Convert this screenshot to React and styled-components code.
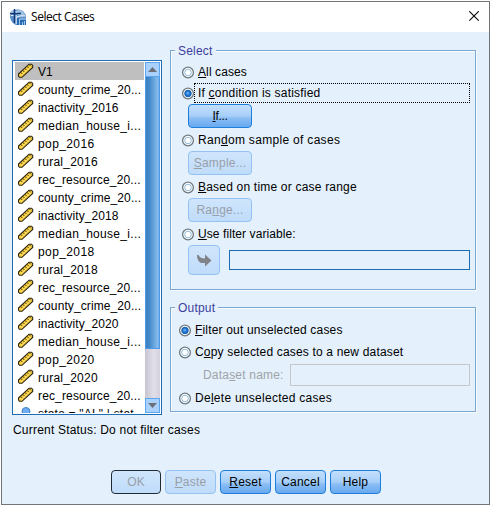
import React from "react";
import styled, { createGlobalStyle } from "styled-components";

const BG = "#e4f0fc";

const GlobalStyle = createGlobalStyle`
  *, *::before, *::after { box-sizing: border-box; }
  body { margin: 0; background: #fff; }
  svg { display: block; flex: none; }
`;

const Page = styled.div`
  width: 491px;
  height: 505px;
  padding: 1px 1px 0;
  background: #fff;
  font: 12px/18px "Liberation Sans", Arial, sans-serif;
  color: #000;
  overflow: hidden;
`;
const Window = styled.div`
  height: 504px;
  display: flex;
  flex-direction: column;
  border: 1px solid #70757a;
  background: ${BG};
`;
const TitleBar = styled.header`
  height: 30px;
  flex: none;
  display: flex;
  align-items: center;
  padding: 0 10px 0 8px;
  background: #fff;
`;
const Title = styled.h1`
  margin: 0 auto 0 4px;
  font: 400 12px/18px "Open Sans", "Noto Sans", sans-serif;
  letter-spacing: -0.45px;
  white-space: nowrap;
`;
const Columns = styled.div`
  display: flex;
  align-items: flex-start;
  height: 389px;
  padding: 18px 0 0 10px;
  gap: 8px;
`;
const ListBox = styled.div`
  width: 150px;
  height: 355px;
  margin-top: 10px;
  padding: 1px;
  display: flex;
  border: 1px solid #1f6db8;
  background: #fff;
`;
const Items = styled.ul`
  width: 131px;
  height: 351px;
  margin: 0;
  padding: 0 0 0 1px;
  list-style: none;
  overflow: hidden;
`;
const Item = styled.li`
  height: 18px;
  width: 129px;
  padding-left: 3px;
  display: flex;
  align-items: center;
  gap: 4px;
  line-height: 20px;
  white-space: nowrap;
  background: ${(p) => (p.$selected ? "#bfbfbf" : "transparent")};
`;
const ItemName = styled.span`
  height: 18px;
  letter-spacing: ${(p) => p.$track}px;
`;
const Text = styled.span`
  letter-spacing: ${(p) => p.$track ?? 0.2}px;
  white-space: nowrap;
  color: ${(p) => (p.$muted ? "#a0a3a8" : "inherit")};
  u {
    text-decoration-thickness: 1px;
    text-underline-offset: 1px;
    text-decoration-skip-ink: none;
  }
`;
const ScrollBar = styled.div`
  width: 15px;
  display: flex;
  flex-direction: column;
  background: linear-gradient(90deg, #c6c4d0, #e1dfe8 60%, #d3d0dc);
`;
const ScrollButton = styled.div`
  height: 15px;
  display: grid;
  place-items: center;
  border: 1px solid #5ba6f0;
  background: #a9d1fb;
`;
const Thumb = styled.div`
  height: 272px;
  border: solid #4d9be8;
  border-width: 0 1px 1px;
  background: linear-gradient(90deg, #3c7fc0, #4288c9 25%, #86bcec 90%, #6aaae6);
  margin-bottom: auto;
`;
const Panels = styled.div`
  display: flex;
  flex-direction: column;
  gap: 17px;
`;
const Group = styled.section`
  width: 306px;
  height: ${(p) => p.$height}px;
  padding: 0 5px 0 ${(p) => p.$inset}px;
  border: 1px solid #7ba7d3;
  box-shadow: 1px 1px 0 #fafdff, inset 1px 1px 0 #fafdff;
`;
const Legend = styled.h2`
  width: fit-content;
  height: 16px;
  margin: -8px 0 0 ${(p) => 4 - p.$inset}px;
  padding: 0 3px;
  font: inherit;
  line-height: 17px;
  color: #3d3d9e;
  background: ${BG};
`;
const Option = styled.div`
  height: 20px;
  margin-top: ${(p) => p.$gap || 0}px;
  display: flex;
  align-items: center;
`;
const OptionLabel = styled.div`
  height: 20px;
  flex: 1;
  margin-left: -1px;
  padding-left: 3px;
  display: flex;
  align-items: center;
  border: 1px dotted ${(p) => (p.$focused ? "#000" : "transparent")};
`;
const Indented = styled.div`
  display: flex;
  align-items: center;
  margin: ${(p) => p.$gap}px 0 0 ${(p) => p.$indent}px;
`;
const tones = {
  normal: { border: "#1b7fdb", bg: "linear-gradient(#c4dffb, #a7cffa 50%, #8abdf4 60%, #68a9ee)", color: "#000" },
  disabled: { border: "#94c3f1", bg: "linear-gradient(#d0e5fc, #bfdcfb)", color: "#999fa8" },
  primary: { border: "#202a33", bg: "linear-gradient(#d0e5fc, #bfdcfb)", color: "#999fa8" },
};
const Button = styled.button`
  width: ${(p) => p.$width}px;
  height: ${(p) => p.$height || 24}px;
  padding: 0;
  display: flex;
  align-items: center;
  justify-content: center;
  font: inherit;
  border: 1px solid ${(p) => tones[p.$tone || "normal"].border};
  border-radius: 4px;
  background: ${(p) => tones[p.$tone || "normal"].bg};
  color: ${(p) => tones[p.$tone || "normal"].color};
`;
const Field = styled.div`
  width: ${(p) => p.$width}px;
  height: ${(p) => p.$height}px;
  margin-left: ${(p) => p.$gap}px;
  border: 1px solid ${(p) => (p.$disabled ? "#c3c7cb" : "#1c6bb5")};
`;
const Status = styled.div`
  margin-left: 11px;
  height: 18px;
`;
const Footer = styled.footer`
  margin: 31px 0 0 109px;
  display: flex;
  gap: 4px;
`;

const AppIcon = () => (
  <svg width="17" height="17" viewBox="0 0 17 17">
    <path d="M1 2Q8-1 13 2L16 6V16H6Q1 14 0 8Z" fill="#5c8fc8" />
    <path d="M7 0Q13 0 15 6H7Z" fill="#9cc0e2" />
    <path d="M0 4.5H11M4.5 0V14" stroke="#123a78" strokeWidth="1.5" />
    <path d="M1 3H3.5M1 6.5H3.5M6.2 2V4M6.2 6V15" stroke="#e6f1fc" />
    <path d="M7 8.5Q8 6.8 11 6.8H15.5" fill="none" stroke="#eef6ff" strokeWidth="1.2" />
    <path d="M7 16V9H9V16M10 16V11H16V16" fill="#286ab0" />
    <path d="M9.5 16V10H16M12.5 16V13M14.5 16V12" fill="none" stroke="#9dc5ea" />
  </svg>
);
const CloseIcon = () => (
  <svg width="10" height="12" viewBox="0 0 10 12">
    <path d="M.3.3l9.4 9.4M9.7.3l-9.4 9.4" stroke="#000" strokeWidth="1.1" />
  </svg>
);
const RulerIcon = () => (
  <svg width="16" height="16" viewBox="0 0 16 16">
    <path d="M.5 11L11 1.2H13.5L14.7 2.5V4.5L4 14.3H1.5L.5 13Z" fill="#fbcf38" stroke="#2a2412" strokeWidth="1.1" />
    <path d="M2.6 9.3l2 2M4.7 7.3l2 2M6.8 5.3l2 2M8.9 3.3l2 2M11 1.5l2 2" stroke="#33290c" strokeWidth=".9" />
    <path d="M3 12.7L13.5 3" stroke="#ffe98a" strokeWidth=".8" />
  </svg>
);
const NominalIcon = () => (
  <svg width="16" height="16" viewBox="0 0 16 16">
    <circle cx="8" cy="6.5" r="4" fill="#6fadf2" stroke="#3e7fc6" />
  </svg>
);
const Radio = ({ checked }) => (
  <svg width="13" height="13" viewBox="0 0 13 13">
    <circle cx="6" cy="6.5" r="5.4" fill="#fff" stroke="#6f7a80" strokeWidth="1.3" />
    <circle cx="6" cy="6.5" r="3.3" fill={checked ? "#1f74cf" : "#fff"} stroke={checked ? "#175fae" : "#8fb9d9"} />
    {checked && <circle cx="5.7" cy="6.2" r="1.4" fill="#5da5ee" />}
  </svg>
);
const Arrow = ({ up }) => (
  <svg width="9" height="5" viewBox="0 0 9 5">
    <path d={up ? "M0 5L4.5 0L9 5Z" : "M0 0L4.5 5L9 0Z"} fill="#6b7078" />
  </svg>
);
const MoveIcon = () => (
  <svg width="15" height="13" viewBox="0 0 15 13">
    <path d="M0 1H1.5Q3 4.5 8 4.5V.5L14.5 6.5L8 12.5V9H4Q0 7 0 1Z" fill="#808488" />
  </svg>
);

const variables = [
  ["V1", 0], ["county_crime_20...", 0.1], ["inactivity_2016", 0.07], ["median_house_i...", 0.3],
  ["pop_2016", 0.4], ["rural_2016", 0.25], ["rec_resource_20...", 0.15], ["county_crime_20...", 0.1],
  ["inactivity_2018", 0.07], ["median_house_i...", 0.3], ["pop_2018", 0.4], ["rural_2018", 0.25],
  ["rec_resource_20...", 0.15], ["county_crime_20...", 0.1], ["inactivity_2020", 0.07],
  ["median_house_i...", 0.3], ["pop_2020", 0.4], ["rural_2020", 0.25], ["rec_resource_20...", 0.15],
];

const RadioOption = ({ checked, focused, gap, track, children }) => (
  <Option $gap={gap}>
    <Radio checked={checked} />
    <OptionLabel $focused={focused}>
      <Text $track={track}>{children}</Text>
    </OptionLabel>
  </Option>
);

export default function App() {
  return (
    <Page>
      <GlobalStyle />
      <Window>
        <TitleBar>
          <AppIcon />
          <Title>Select Cases</Title>
          <CloseIcon />
        </TitleBar>
        <Columns>
          <ListBox>
            <Items>
              {variables.map(([name, track], i) => (
                <Item key={i} $selected={i === 0}>
                  <RulerIcon />
                  <ItemName $track={track}>{name}</ItemName>
                </Item>
              ))}
              <Item>
                <NominalIcon />
                <ItemName $track={0.2}>state = "AL" | stat...</ItemName>
              </Item>
            </Items>
            <ScrollBar>
              <ScrollButton><Arrow up /></ScrollButton>
              <Thumb />
              <ScrollButton><Arrow /></ScrollButton>
            </ScrollBar>
          </ListBox>
          <Panels>
            <Group $height={240} $inset={11}>
              <Legend $inset={11}><Text>Select</Text></Legend>
              <RadioOption gap={3} track={0.1}><u>A</u>ll cases</RadioOption>
              <RadioOption gap={1} checked focused>If <u>c</u>ondition is satisfied</RadioOption>
              <Indented $gap={1} $indent={6}>
                <Button $width={64}><Text $track={-0.35}><u>I</u>f...</Text></Button>
              </Indented>
              <RadioOption gap={2} track={0.31}>Ran<u>d</u>om sample of cases</RadioOption>
              <Indented $gap={1} $indent={6}>
                <Button $width={64} $tone="disabled"><Text><u>S</u>ample...</Text></Button>
              </Indented>
              <RadioOption gap={2}><u>B</u>ased on time or case range</RadioOption>
              <Indented $gap={1} $indent={6}>
                <Button $width={64} $tone="disabled"><Text>Ra<u>n</u>ge...</Text></Button>
              </Indented>
              <RadioOption gap={2} track={0.08}><u>U</u>se filter variable:</RadioOption>
              <Indented $gap={1} $indent={6}>
                <Button $width={32} $height={30} $tone="disabled"><MoveIcon /></Button>
                <Field $width={241} $height={20} $gap={9} />
              </Indented>
            </Group>
            <Group $height={105} $inset={8}>
              <Legend $inset={8}><Text>Output</Text></Legend>
              <RadioOption gap={4} checked track={0.18}><u>F</u>ilter out unselected cases</RadioOption>
              <RadioOption gap={2} track={0.17}>C<u>o</u>py selected cases to a new dataset</RadioOption>
              <Indented $gap={2} $indent={24}>
                <Text $muted>Data<u>s</u>et name:</Text>
                <Field $width={180} $height={22} $gap={6} $disabled />
              </Indented>
              <RadioOption gap={2} track={0.27}>De<u>l</u>ete unselected cases</RadioOption>
            </Group>
          </Panels>
        </Columns>
        <Status><Text>Current Status: Do not filter cases</Text></Status>
        <Footer>
          <Button $width={50} $tone="primary"><Text>OK</Text></Button>
          <Button $width={51} $tone="disabled"><Text><u>P</u>aste</Text></Button>
          <Button $width={51}><Text><u>R</u>eset</Text></Button>
          <Button $width={51}><Text>Cancel</Text></Button>
          <Button $width={51}><Text>Help</Text></Button>
        </Footer>
      </Window>
    </Page>
  );
}
